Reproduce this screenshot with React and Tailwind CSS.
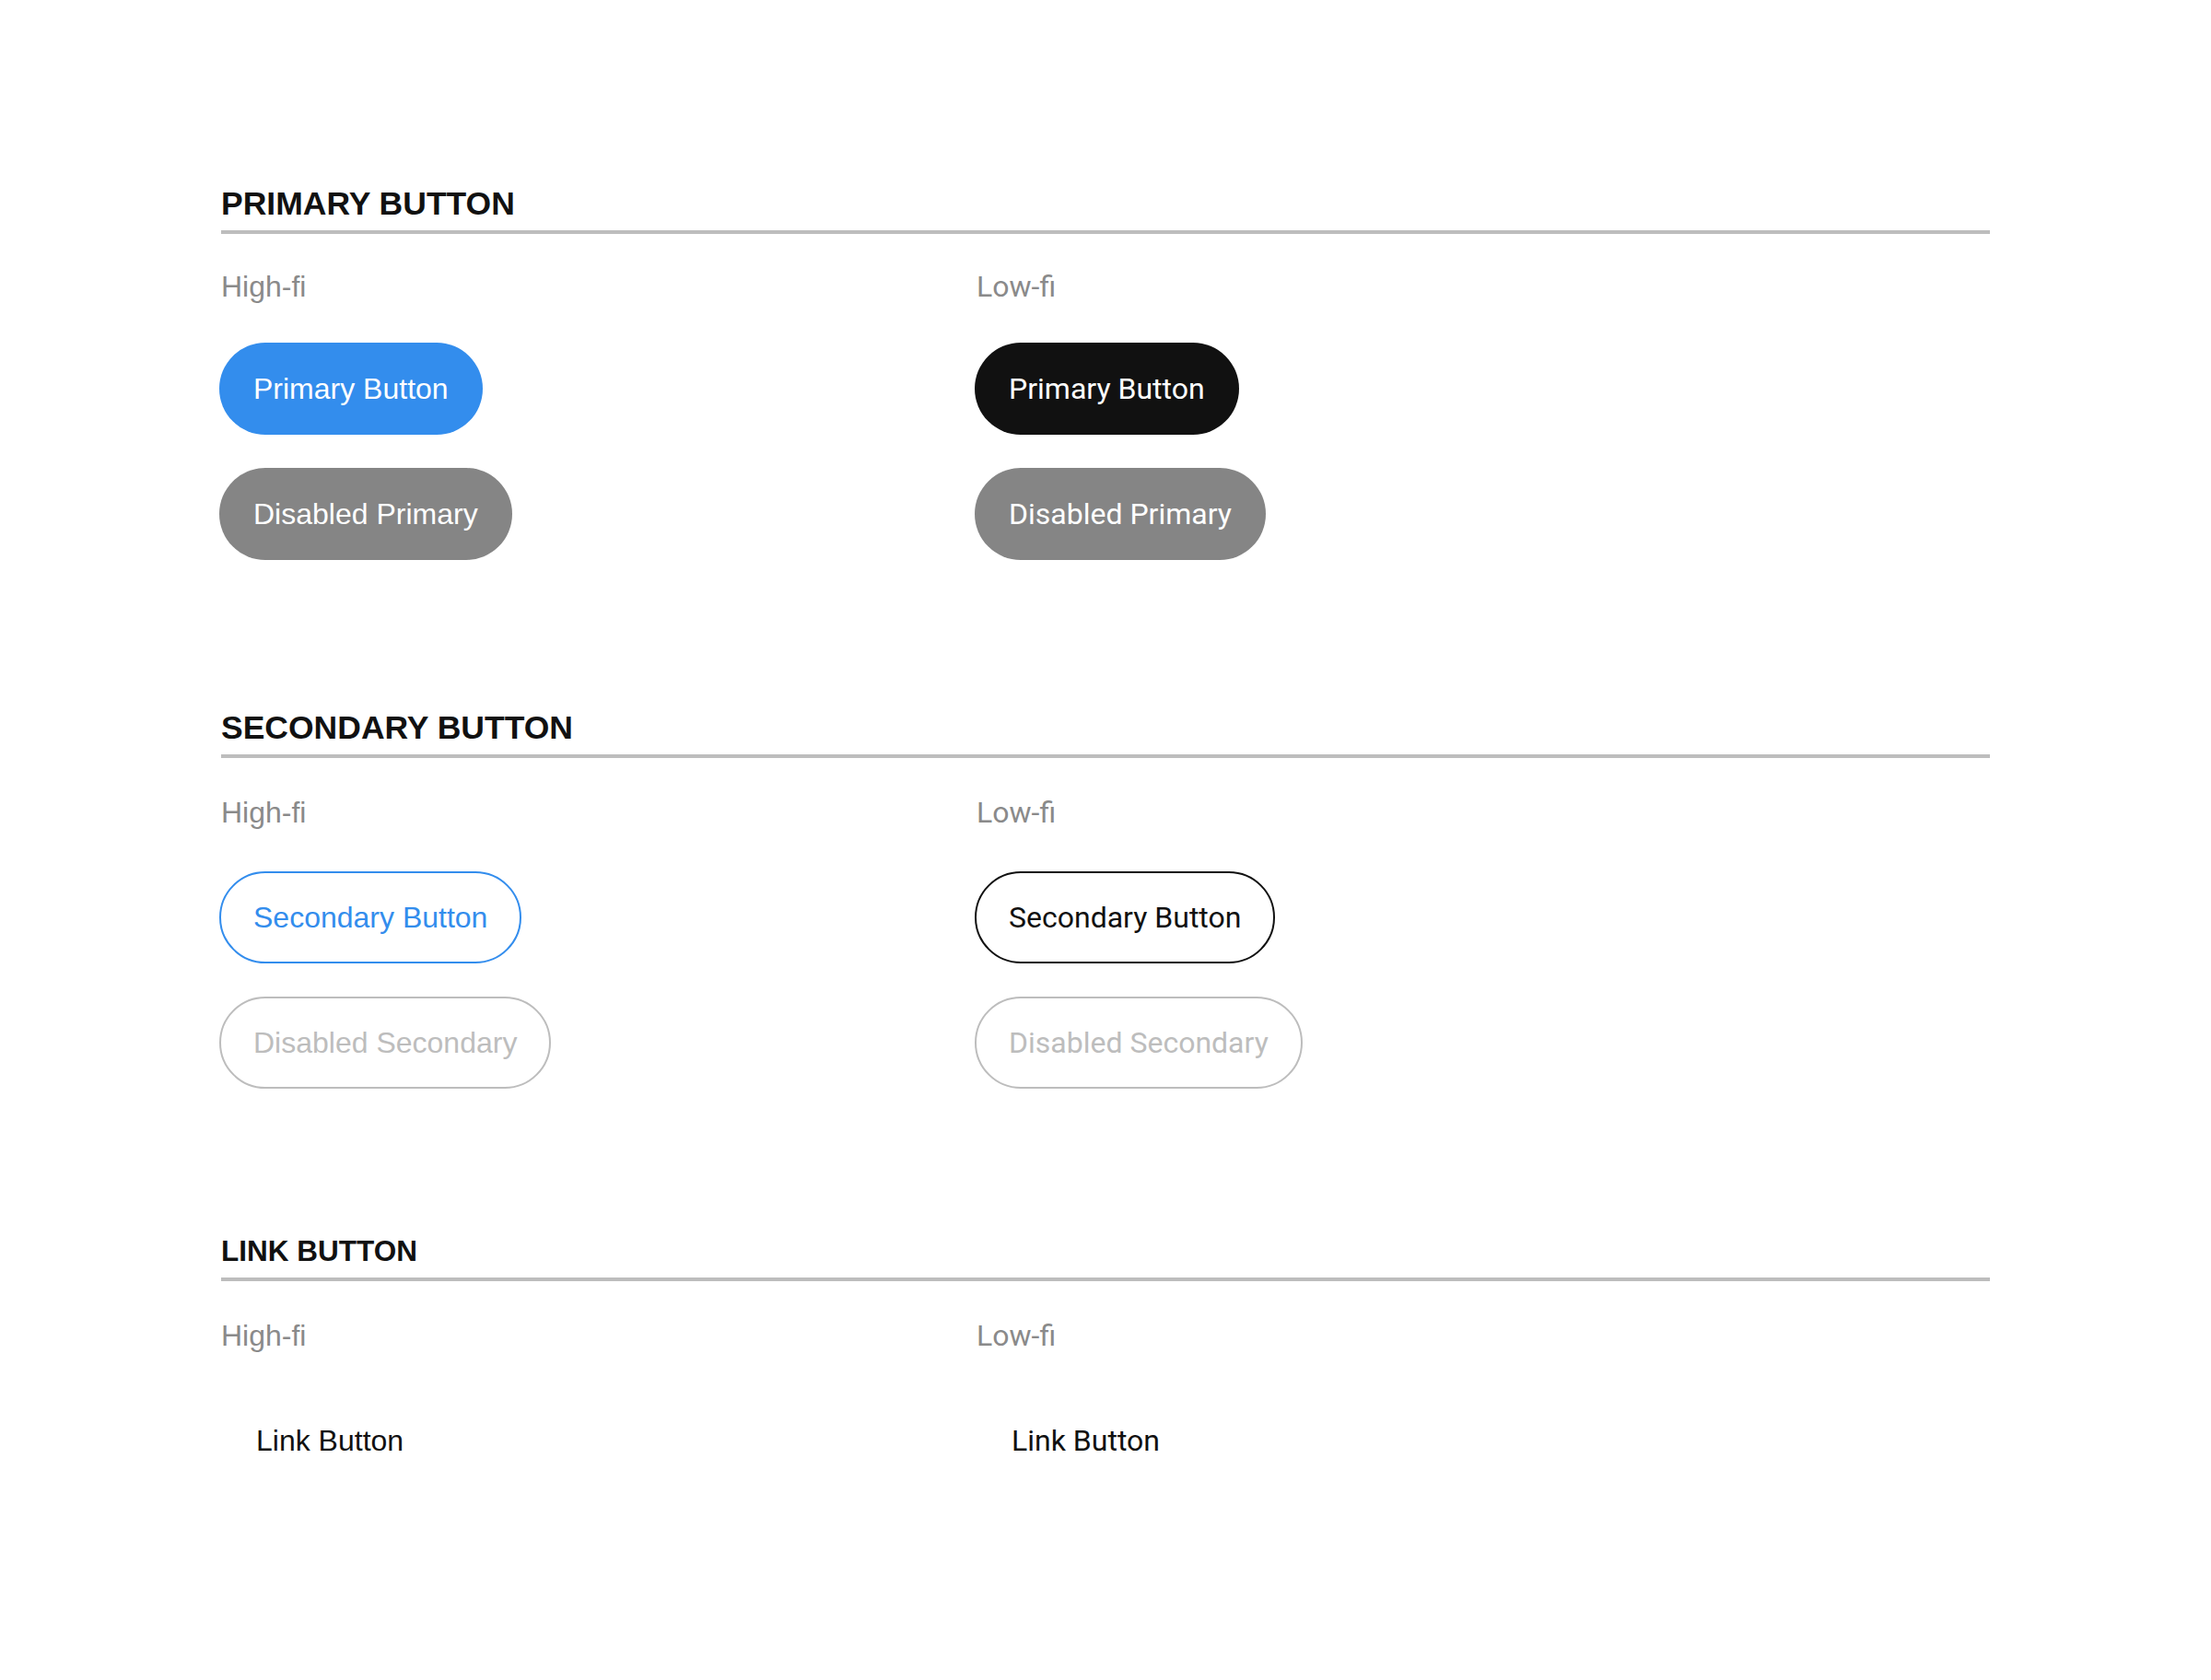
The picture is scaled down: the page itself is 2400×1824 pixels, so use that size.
const hi = "font-['Liberation_Sans',Arial,Helvetica,sans-serif]";
const lo = "font-['Roboto',sans-serif]";

function Button({ variant, font, children }) {
  const styles = {
    primary: 'border-transparent bg-[#338ded] text-white',
    primaryLo: 'border-transparent bg-[#111111] text-white',
    disabled: 'border-transparent bg-[#858585] text-white',
    secondary: 'border-[#338ded] bg-white text-[#338ded]',
    secondaryLo: 'border-[#111111] bg-white text-[#111111]',
    disabledSecondary: 'border-[#bdbdbd] bg-white text-[#bdbdbd]',
    link: 'border-transparent bg-transparent text-[#111111]',
  };

  return (
    <button
      type="button"
      className={`-ml-[2px] inline-flex whitespace-nowrap rounded-full border-2 py-6 text-[32px] leading-[48px] ${
        variant === 'link' ? 'px-[38px]' : 'px-[35px]'
      } ${styles[variant]} ${font}`}
    >
      {children}
    </button>
  );
}

function Column({ label, font, tight, children }) {
  return (
    <div className="flex flex-col items-start">
      <div className={`text-[32px] leading-none text-[#8a8a8a] ${font} ${tight ? 'mb-[45px]' : 'mb-[48px]'}`}>
        {label}
      </div>
      <div className="flex flex-col items-start gap-9">{children}</div>
    </div>
  );
}

function Section({ title, titleSize, tight, className, hiItems, loItems }) {
  return (
    <section className={className}>
      <h2
        className={`border-b-4 border-[#bdbdbd] pb-[11px] font-bold leading-[35px] text-[#111111] ${titleSize} ${hi}`}
      >
        {title}
      </h2>
      <div className={`grid grid-cols-[820px_1fr] ${tight ? 'mt-[41px]' : 'mt-[43px]'}`}>
        <Column label="High-fi" font={hi} tight={tight}>
          {hiItems}
        </Column>
        <Column label="Low-fi" font={lo} tight={tight}>
          {loItems}
        </Column>
      </div>
    </section>
  );
}

export default function App() {
  return (
    <div className="min-h-screen bg-white pb-[200px] pl-[240px] pr-[240px] pt-[204px]">
      {/* Primary */}
      <Section
        title="PRIMARY BUTTON"
        titleSize="text-[35.5px]"
        tight
        hiItems={
          <>
            <Button variant="primary" font={hi}>Primary Button</Button>
            <Button variant="disabled" font={hi}>Disabled Primary</Button>
          </>
        }
        loItems={
          <>
            <Button variant="primaryLo" font={lo}>Primary Button</Button>
            <Button variant="disabled" font={lo}>Disabled Primary</Button>
          </>
        }
      />

      {/* Secondary */}
      <Section
        title="SECONDARY BUTTON"
        titleSize="text-[35.5px]"
        className="mt-[165px]"
        hiItems={
          <>
            <Button variant="secondary" font={hi}>Secondary Button</Button>
            <Button variant="disabledSecondary" font={hi}>Disabled Secondary</Button>
          </>
        }
        loItems={
          <>
            <Button variant="secondaryLo" font={lo}>Secondary Button</Button>
            <Button variant="disabledSecondary" font={lo}>Disabled Secondary</Button>
          </>
        }
      />

      {/* Link */}
      <Section
        title="LINK BUTTON"
        titleSize="text-[31.5px]"
        className="mt-[159px]"
        hiItems={<Button variant="link" font={hi}>Link Button</Button>}
        loItems={<Button variant="link" font={lo}>Link Button</Button>}
      />
    </div>
  );
}
